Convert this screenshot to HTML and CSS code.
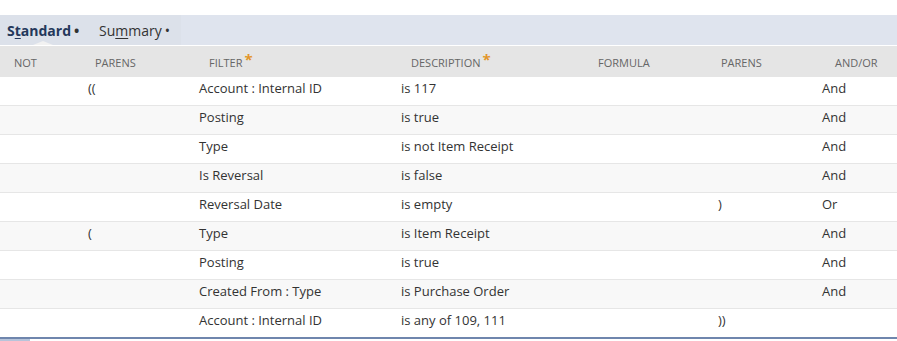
FILE: index.html
```html
<!DOCTYPE html>
<html lang="en">
<head>
    <meta charset="UTF-8">
    <title>Criteria</title>
    <link rel="stylesheet" href="styles.css">
</head>
<body>
    <div class="panel">
        <div class="tabs">
            <div class="tab-group">
                <span class="tab current">S<u>t</u>andard<i>&bull;</i></span>
                <span class="tab">Su<u>m</u>mary<i>&bull;</i></span>
            </div>
        </div>

        <table class="grid">
            <colgroup>
                <col style="width:79px">
                <col style="width:111px">
                <col style="width:202px">
                <col style="width:187px">
                <col style="width:130px">
                <col style="width:104px">
                <col>
            </colgroup>
            <thead>
                <tr>
                    <th>Not</th>
                    <th>Parens</th>
                    <th>Filter<b>*</b></th>
                    <th>Description<b>*</b></th>
                    <th>Formula</th>
                    <th>Parens</th>
                    <th>And/Or</th>
                </tr>
            </thead>
            <tbody>
                <tr><td></td><td>((</td><td>Account : Internal ID</td><td>is 117</td><td></td><td></td><td>And</td></tr>
                <tr><td></td><td></td><td>Posting</td><td>is true</td><td></td><td></td><td>And</td></tr>
                <tr><td></td><td></td><td>Type</td><td>is not Item Receipt</td><td></td><td></td><td>And</td></tr>
                <tr><td></td><td></td><td>Is Reversal</td><td>is false</td><td></td><td></td><td>And</td></tr>
                <tr><td></td><td></td><td>Reversal Date</td><td>is empty</td><td></td><td>)</td><td>Or</td></tr>
                <tr><td></td><td>(</td><td>Type</td><td>is Item Receipt</td><td></td><td></td><td>And</td></tr>
                <tr><td></td><td></td><td>Posting</td><td>is true</td><td></td><td></td><td>And</td></tr>
                <tr><td></td><td></td><td>Created From : Type</td><td>is Purchase Order</td><td></td><td></td><td>And</td></tr>
                <tr><td></td><td></td><td>Account : Internal ID</td><td>is any of 109, 111</td><td></td><td>))</td><td></td></tr>
            </tbody>
        </table>
        <div class="foot"></div>
    </div>
</body>
</html>
```

FILE: styles.css
```css
* {
    margin: 0;
    padding: 0;
    box-sizing: border-box;
}

body {
    background: #fff;
    font-family: "Open Sans", "Liberation Sans", sans-serif;
    color: #333;
}

.panel {
    padding-top: 15px;
    width: 897px;
}

.tabs {
    height: 30px;
    background-color: #dfe4ee;
    display: flex;
}

.tab-group {
    width: 181px;
    display: flex;
    align-items: center;
    background-color: #dce1ea;
}

.tab {
    position: relative;
    font-size: 14px;
    color: #333;
    height: 30px;
    line-height: 31px;
}

.tab u {
    text-decoration-thickness: 1px;
    text-underline-offset: 2px;
}

.tab i {
    font-style: normal;
    font-size: 14px;
    margin-left: 3px;
}

.tab:first-child {
    padding-left: 7px;
    width: 99px;
}

.tab.current {
    font-weight: bold;
    color: #24385b;
}

.tab.current i {
    color: #333;
}

.tab.current:after {
    content: "";
    position: absolute;
    left: 33px;
    bottom: 0;
    border-left: 10px solid transparent;
    border-right: 10px solid transparent;
    border-bottom: 4px solid #f2f2f2;
}

.grid {
    width: 897px;
    border-collapse: collapse;
    table-layout: fixed;
}

.grid th {
    height: 31px;
    background-color: #e5e5e5;
    border-top: 1px solid #fff;
    font-size: 11px;
    font-weight: normal;
    text-transform: uppercase;
    color: #666;
    text-align: left;
    padding-left: 19px;
    padding-top: 2px;
}

.grid th:nth-child(1) {
    padding-left: 14px;
}

.grid th:nth-child(2) {
    padding-left: 16px;
}

.grid th:nth-child(6) {
    padding-left: 12px;
}

.grid th:nth-child(7) {
    padding-left: 22px;
}

.grid th b {
    color: #e3962a;
    font-size: 15px;
    font-weight: bold;
    vertical-align: 2px;
    margin-left: 2px;
    line-height: 10px;
}

.grid td {
    height: 29px;
    font-size: 13px;
    padding-left: 9px;
    padding-bottom: 6px;
    border-bottom: 1px solid #e6e6e6;
    color: #333;
    white-space: nowrap;
}

.grid tbody tr:nth-child(even) td {
    background-color: #f8f8f8;
}

.grid tbody tr:last-child td {
    height: 28px;
    padding-bottom: 5px;
    border-bottom: 0;
}

.foot {
    height: 4px;
    border-top: 2px solid #6f86ad;
    background: linear-gradient(90deg, #b7c4da 0, #b7c4da 30px, #fff 30px);
}
```
